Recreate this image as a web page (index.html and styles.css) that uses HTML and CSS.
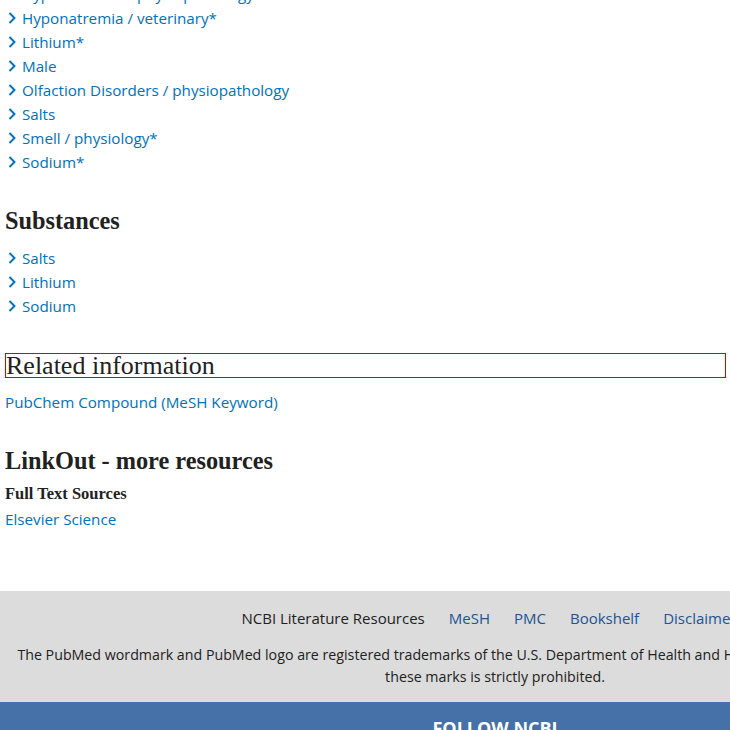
FILE: index.html
```
<!DOCTYPE html>
<html lang="en">
<head>
<meta charset="utf-8">
<title>PubMed</title>
<link rel="stylesheet" href="styles.css">
</head>
<body>
<main class="main">
  <section class="section">
    <ul class="terms">
      <li><svg class="chev" viewBox="0 0 8 12"><path d="M1.5 1 L6.5 6 L1.5 11"/></svg><a href="#">Hyponatremia / physiopathology</a></li>
      <li><svg class="chev" viewBox="0 0 8 12"><path d="M1.5 1 L6.5 6 L1.5 11"/></svg><a href="#">Hyponatremia / veterinary*</a></li>
      <li><svg class="chev" viewBox="0 0 8 12"><path d="M1.5 1 L6.5 6 L1.5 11"/></svg><a href="#">Lithium*</a></li>
      <li><svg class="chev" viewBox="0 0 8 12"><path d="M1.5 1 L6.5 6 L1.5 11"/></svg><a href="#">Male</a></li>
      <li><svg class="chev" viewBox="0 0 8 12"><path d="M1.5 1 L6.5 6 L1.5 11"/></svg><a href="#">Olfaction Disorders / physiopathology</a></li>
      <li><svg class="chev" viewBox="0 0 8 12"><path d="M1.5 1 L6.5 6 L1.5 11"/></svg><a href="#">Salts</a></li>
      <li><svg class="chev" viewBox="0 0 8 12"><path d="M1.5 1 L6.5 6 L1.5 11"/></svg><a href="#">Smell / physiology*</a></li>
      <li><svg class="chev" viewBox="0 0 8 12"><path d="M1.5 1 L6.5 6 L1.5 11"/></svg><a href="#">Sodium*</a></li>
    </ul>
  </section>

  <section class="section">
    <h2 class="heading">Substances</h2>
    <ul class="terms">
      <li><svg class="chev" viewBox="0 0 8 12"><path d="M1.5 1 L6.5 6 L1.5 11"/></svg><a href="#">Salts</a></li>
      <li><svg class="chev" viewBox="0 0 8 12"><path d="M1.5 1 L6.5 6 L1.5 11"/></svg><a href="#">Lithium</a></li>
      <li><svg class="chev" viewBox="0 0 8 12"><path d="M1.5 1 L6.5 6 L1.5 11"/></svg><a href="#">Sodium</a></li>
    </ul>
  </section>

  <section class="section related">
    <h2 class="heading-focus">Related information</h2>
    <a class="plain-link" href="#">PubChem Compound (MeSH Keyword)</a>
  </section>

  <section class="section linkout">
    <h2 class="heading">LinkOut - more resources</h2>
    <h3 class="subheading">Full Text Sources</h3>
    <a class="plain-link" href="#">Elsevier Science</a>
  </section>
</main>

<footer class="footer">
  <div class="footer-grey">
    <nav class="footer-links">
      <span class="footer-label">NCBI Literature Resources</span>
      <a href="#">MeSH</a>
      <a href="#">PMC</a>
      <a href="#">Bookshelf</a>
      <a href="#">Disclaimer</a>
    </nav>
    <p class="trademark">The PubMed wordmark and PubMed logo are registered trademarks of the U.S. Department of Health and Human Services. Unauthorized use of these marks is strictly prohibited.</p>
  </div>
  <div class="footer-blue">
    <h3 class="follow">FOLLOW NCBI</h3>
  </div>
</footer>
</body>
</html>
```

FILE: styles.css
```
html {
  overflow: hidden;
}
body {
  margin: 0;
  width: 990px;
  font-family: "Open Sans", "Noto Sans", sans-serif;
  font-size: 15.2px;
  color: #212121;
  background: #fff;
}
a {
  color: #0071bc;
  text-decoration: none;
}
.main {
  width: 721px;
  padding: 0 0 0 5px;
  margin-top: -18px;
}
.section + .section {
  margin-top: 32px;
}
.terms {
  list-style: none;
  margin: 0;
  padding: 0;
}
.terms li {
  display: flex;
  align-items: center;
  height: 24px;
  line-height: 24px;
}
.chev {
  width: 8px;
  height: 12px;
  margin: 0 6px 1px 3px;
  fill: none;
  stroke: #0071bc;
  stroke-width: 1.9;
  flex: none;
}
.heading {
  margin: 0 0 10px;
  font-family: "Liberation Serif", serif;
  font-weight: bold;
  font-size: 24.3px;
  line-height: 30px;
  color: #212121;
}
.related {
  margin-top: 35px !important;
}
.heading-focus {
  margin: 0 0 12px;
  font-family: "Liberation Serif", serif;
  font-weight: normal;
  font-size: 26px;
  line-height: 23px;
  border: 1px solid #e00000;
  color: #212121;
}
.plain-link {
  display: block;
  line-height: 24px;
}
.linkout .heading {
  margin-bottom: 7px;
}
.subheading {
  margin: 0 0 2px;
  font-family: "Liberation Serif", serif;
  font-weight: bold;
  font-size: 16.5px;
  line-height: 22px;
}
.footer {
  margin-top: 60px;
}
.footer-grey {
  background: #dcdcdc;
  padding: 15px 12px 14px;
  text-align: center;
}
.footer-links {
  display: flex;
  justify-content: center;
  gap: 24px;
  padding-right: 12px;
  line-height: 24px;
  font-size: 15px;
}
.footer-links a {
  color: #205493;
}
.footer-label {
  color: #212121;
}
.trademark {
  margin: 14px 0 0;
  font-size: 14.22px;
  line-height: 22px;
  color: #212121;
}
.footer-blue {
  background: #4571a8;
  height: 80px;
  padding-top: 14px;
  text-align: center;
}
.follow {
  margin: 0;
  color: #fff;
  font-size: 18px;
  font-weight: bold;
  line-height: 24px;
}
```
